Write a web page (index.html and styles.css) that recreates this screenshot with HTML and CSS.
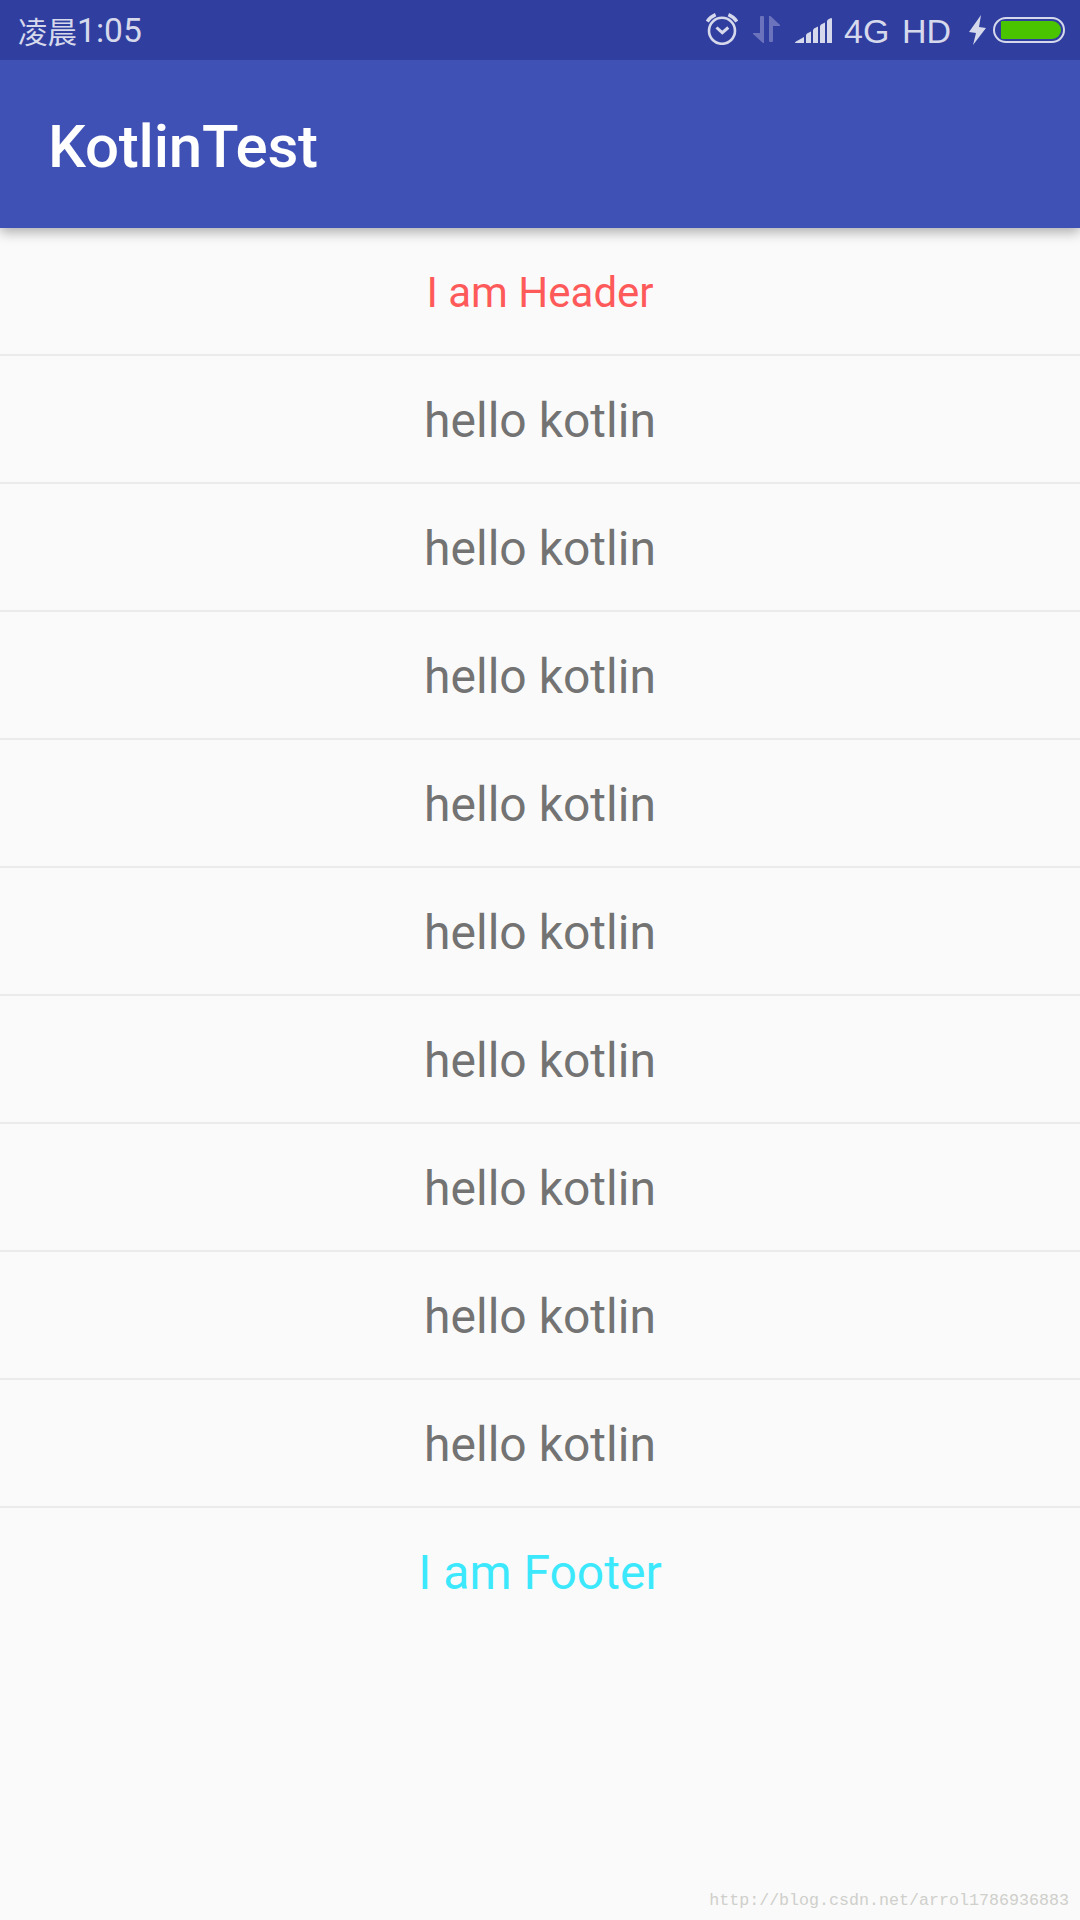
FILE: index.html
```html
<!DOCTYPE html>
<html lang="zh">
<head>
  <meta charset="UTF-8" />
  <meta name="viewport" content="width=device-width, initial-scale=1.0"/>
  <title>KotlinTest</title>
  <link rel="stylesheet" href="styles.css">
</head>
<body>

  <div class="status-bar">
    <div class="time"><span class="period">凌晨</span><span class="clock">1:05</span></div>

    <div class="status-icons">
      <svg class="alarm" width="32" height="32" viewBox="0 0 32 32" fill="none" stroke="#d6d9ec">
        <circle cx="16" cy="17.8" r="13" stroke-width="2.6"/>
        <path d="M10.5 14.5l5.8 5.2 6-5.2" stroke-width="3"/>
        <path d="M1.200 8.600Q4 4 9.600 1.600M30.800 8.600Q28 4 22.400 1.600" stroke-width="3.4"/>
      </svg>
      <svg class="data" width="28" height="28" viewBox="0 0 28 28" fill="#6a73bb">
        <path d="M7 1q0-1 1-1h2q1 0 1 1v26H10L0 18v-1h7z"/>
        <path d="M16 0h1.5L27 9v1h-7v15q0 1-1 1h-2q-1 0-1-1z"/>
      </svg>
      <svg class="signal" width="38" height="26" viewBox="0 0 38 26" fill="#d6d9ec">
        <path d="M0 25q0-1 1-1.500L9 19v6z"/>
        <path d="M11 17l1-1.500 4-2v11.500h-5z"/>
        <path d="M18 12l1-1.500 4-2v16.500h-5z"/>
        <path d="M25 8l1-1.500 4-2v20.500h-5z"/>
        <path d="M32 3l1-1.500 3-1.500q1 0 1 1v24h-5z"/>
      </svg>
      <span class="network">4G</span>
      <span class="hd">HD</span>
      <svg class="bolt" width="18" height="30" viewBox="0 0 18 30" fill="#d6d9ec">
        <path d="M12 0L0 17l7 1-3 12L17 13l-7-1z"/>
      </svg>
      <div class="battery"><div class="battery-level"></div></div>
    </div>
  </div>

  <header class="app-bar">KotlinTest</header>

  <ul class="list">
    <li class="row header">I am Header</li>
    <li class="row">hello kotlin</li>
    <li class="row">hello kotlin</li>
    <li class="row">hello kotlin</li>
    <li class="row">hello kotlin</li>
    <li class="row">hello kotlin</li>
    <li class="row">hello kotlin</li>
    <li class="row">hello kotlin</li>
    <li class="row">hello kotlin</li>
    <li class="row">hello kotlin</li>
    <li class="row footer">I am Footer</li>
  </ul>

  <div class="watermark">http://blog.csdn.net/arrol1786936883</div>

</body>
</html>
```
FILE: styles.css
```css
* {
  box-sizing: border-box;
}

body {
  margin: 0;
  height: 1920px;
  display: flex;
  flex-direction: column;
  background: #fafafa;
  font-family: Roboto, sans-serif;
  overflow: hidden;
}

/* status bar */
.status-bar {
  height: 60px;
  flex: none;
  position: relative;
  z-index: 2; /* stays above the app bar shadow */
  display: flex;
  justify-content: space-between;
  padding: 0 15px 0 18px;
  background: #303f9f;
  color: #d6d9ec;
}

.time {
  display: flex;
  line-height: 60px;
}

.period {
  font-family: "Noto Sans CJK SC", sans-serif;
  font-size: 29.5px;
}

.clock {
  font-size: 33.6px;
  line-height: 62px;
}

.status-icons {
  display: flex;
  align-items: flex-start;
}

.alarm {
  margin-top: 13px;
}

.data {
  margin: 16px 0 0 15px;
}

.signal {
  margin: 18px 0 0 14px;
}

.network,
.hd {
  font-family: "Liberation Sans", sans-serif;
  font-size: 34px;
  line-height: 62px;
}

.network {
  width: 45px;
  margin-left: 11px;
}

.hd {
  width: 49px;
  margin-left: 13px;
}

.bolt {
  margin: 15px 0 0 18px;
}

.battery {
  width: 72px;
  height: 26px;
  margin: 17px 0 0 6px;
  padding: 2px 2px 2px 6px;
  border: 2px solid #d6d9ec;
  border-radius: 13px;
}

.battery-level {
  height: 18px;
  background: #4bc400;
  border-radius: 1px 9px 9px 1px;
}

/* app bar */
.app-bar {
  height: 168px;
  flex: none;
  position: relative;
  padding-left: 48px;
  background: #3f51b5;
  color: #fff;
  font-size: 60px;
  font-weight: 500;
  letter-spacing: -0.2px;
  line-height: 173px;
  box-shadow: 0 4px 12px rgba(0,0,0,0.32);
}

/* list */
.list {
  margin: 0;
  padding: 0;
  list-style: none;
}

.row {
  height: 128px;
  padding-top: 3px;
  border-bottom: 2px solid #ebebeb;
  color: #737373;
  font-size: 48px;
  line-height: 123px;
  text-align: center;
}

.header {
  color: #ff5a5a;
  font-size: 42px;
}

.footer {
  border-bottom: none;
  color: #3ce8fc;
}

.watermark {
  margin-top: auto;
  padding: 0 11px 7px 0;
  color: #cfcfcb;
  font-family: "Liberation Mono", monospace;
  font-size: 16.66px;
  line-height: 24px;
  text-align: right;
}
```
